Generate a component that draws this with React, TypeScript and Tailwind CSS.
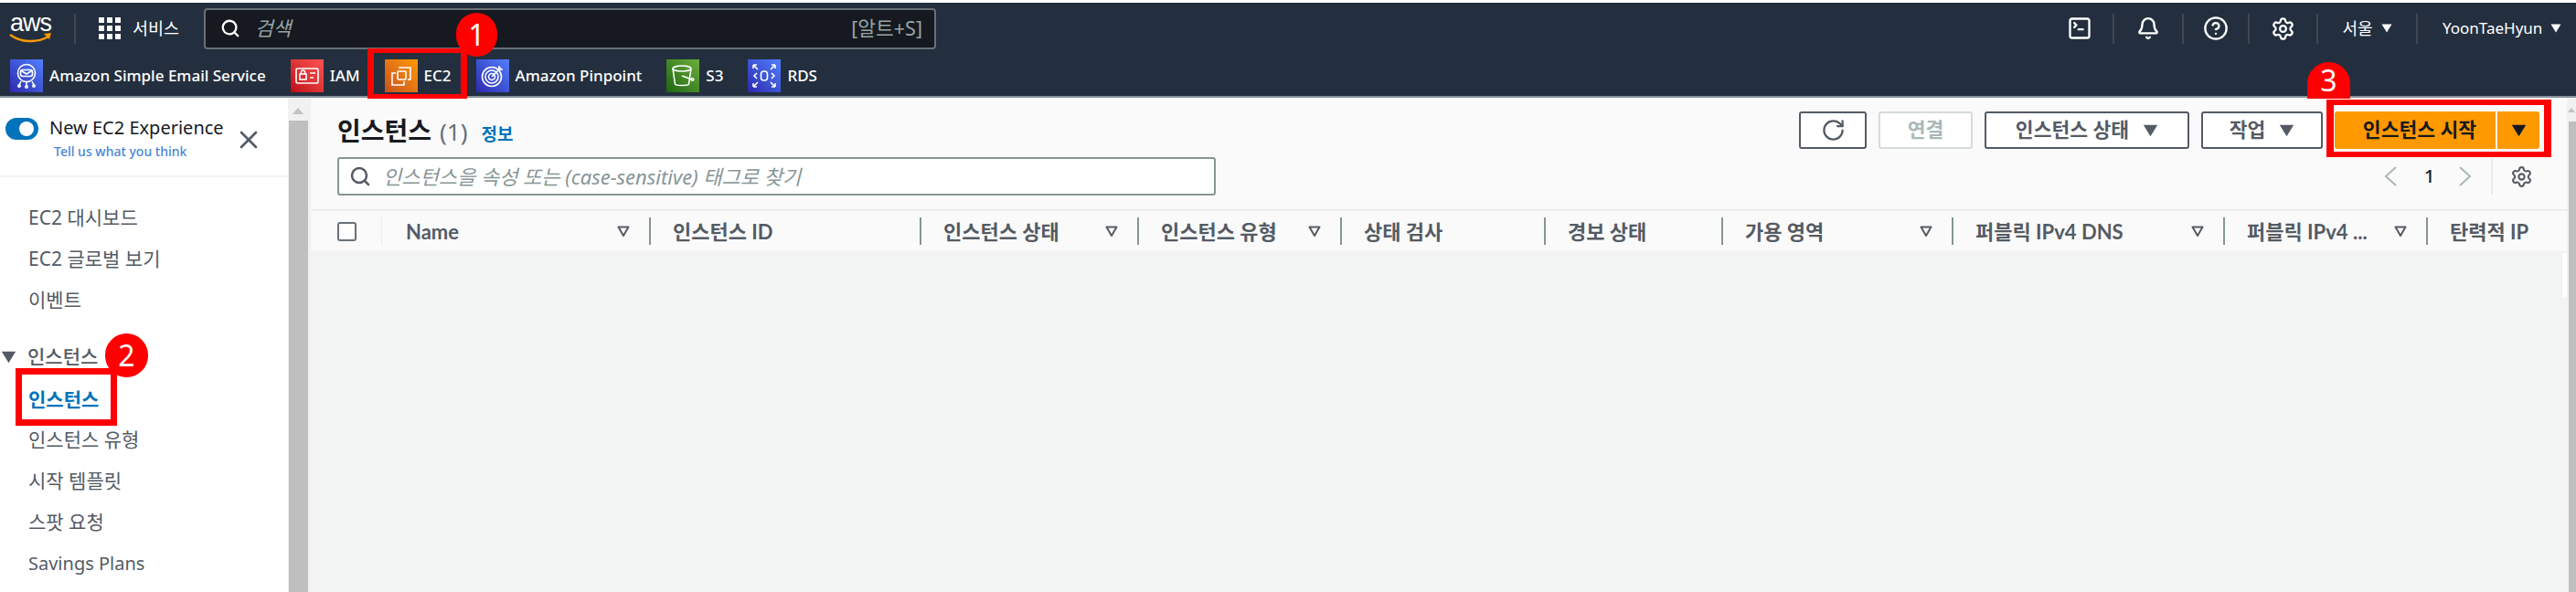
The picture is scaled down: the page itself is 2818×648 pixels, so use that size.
import { type ReactNode } from "react"
import { Bell, CircleHelp, RotateCw, Search, Settings, SquareTerminal, X } from "lucide-react"

function Caret({ className }: { className: string }) {
  return (
    <svg viewBox="0 0 12 10" className={className}>
      <path d="M0.5 0.5h11L6 9.5z" fill="currentColor" />
    </svg>
  )
}

function FilterIcon() {
  return (
    <svg viewBox="0 0 14 14" className="h-[14px] w-[14px] text-[#545b64]">
      <path d="M1.5 2.5h11L7 12z" fill="none" stroke="currentColor" strokeWidth="2" strokeLinejoin="round" />
    </svg>
  )
}

function ServiceIcon({ tone, children }: { tone: string; children: ReactNode }) {
  return (
    <span className={`flex h-[36px] w-[36px] items-center justify-center ${tone}`}>
      <svg viewBox="0 0 36 36" className="h-[36px] w-[36px]" fill="none" stroke="#fff" strokeWidth="1.6">
        {children}
      </svg>
    </span>
  )
}

const blueTone = "bg-gradient-to-tr from-[#2e27ad] to-[#527fff]"

const shortcuts = [
  {
    name: "Amazon Simple Email Service",
    tone: blueTone,
    icon: (
      <>
        <circle cx="18" cy="15" r="9.5" />
        <rect x="11.5" y="11.5" width="13" height="7" rx="2.5" />
        <path d="M11.5 12l6.5 4 6.5-4M18 25v4M12 24l-2 4M24 24l2 4" />
        <circle cx="10" cy="29" r="1.2" />
        <circle cx="18" cy="30" r="1.2" />
        <circle cx="26" cy="29" r="1.2" />
      </>
    ),
  },
  {
    name: "IAM",
    tone: "bg-gradient-to-tr from-[#bd0816] to-[#ff5252]",
    icon: (
      <>
        <rect x="6" y="10" width="24" height="16" rx="1.5" />
        <rect x="10" y="16" width="7" height="6" />
        <path d="M11.5 16v-2a2 2 0 0 1 4 0v2M21 15h6M21 20h4" />
      </>
    ),
  },
  {
    name: "EC2",
    tone: "bg-gradient-to-tr from-[#c8511b] to-[#ff9900]",
    icon: (
      <>
        <rect x="14" y="13" width="9" height="9" rx="1" />
        <path d="M15 9h13v13h-3M12 15H8v13h13v-4" />
      </>
    ),
  },
  {
    name: "Amazon Pinpoint",
    tone: blueTone,
    icon: (
      <>
        <circle cx="17" cy="19" r="10.5" />
        <circle cx="17" cy="19" r="7" />
        <circle cx="17" cy="19" r="3.5" />
        <path d="M17 19L27 9M25 7v4h4" />
      </>
    ),
  },
  {
    name: "S3",
    tone: "bg-gradient-to-tr from-[#1b660f] to-[#6cae3e]",
    icon: (
      <>
        <ellipse cx="17" cy="10" rx="10" ry="3" />
        <path d="M7 10l2.5 17c.3 2 14.700 2 15 0L27 10M17 18l11 4" />
        <circle cx="28.500" cy="22" r="1.300" />
      </>
    ),
  },
  {
    name: "RDS",
    tone: blueTone,
    icon: (
      <>
        <rect x="14.500" y="13" width="7" height="10" rx="3" />
        <path d="M6 6l5 5M6 6v4M6 6h4M30 6l-5 5M30 6v4M30 6h-4M6 30l5-5M6 30v-4M6 30h4M30 30l-5-5M30 30v-4M30 30h-4M10 15l-3 3 3 3M26 15l3 3-3 3" />
      </>
    ),
  },
]

const columns = [
  { label: "Name", width: "w-[292px]", filter: true },
  { label: "인스턴스 ID", width: "w-[296px]", filter: false },
  { label: "인스턴스 상태", width: "w-[238px]", filter: true },
  { label: "인스턴스 유형", width: "w-[222px]", filter: true },
  { label: "상태 검사", width: "w-[223px]", filter: false },
  { label: "경보 상태", width: "w-[194px]", filter: false },
  { label: "가용 영역", width: "w-[252px]", filter: true },
  { label: "퍼블릭 IPv4 DNS", width: "w-[297px]", filter: true },
  { label: "퍼블릭 IPv4 ...", width: "w-[222px]", filter: true },
  { label: "탄력적 IP", width: "w-[154px]", filter: false },
]

function TopBar() {
  return (
    <header className="h-[104px] border-b-2 border-[#8a929b] bg-[#232f3e] text-white">
      <div className="flex h-[56px] items-center pl-[10px]">
        <div className="flex w-[47px] flex-col items-center">
          <span className="font-['Liberation_Sans',sans-serif] text-[27px] leading-[22px] tracking-[-1px]">aws</span>
          <svg viewBox="0 0 47 12" className="h-[12px] w-[47px]">
            <path d="M1 2c12 9 30 9 42 2" fill="none" stroke="#ff9900" strokeWidth="2.500" />
            <path d="M38 1l8-1-2 7z" fill="#ff9900" />
          </svg>
        </div>
        <div className="ml-[24px] h-[33px] border-l-2 border-[#414750]" />
        <svg viewBox="0 0 24 24" className="ml-[25px] h-[24px] w-[24px]" fill="#fff">
          <rect width="6" height="6" />
          <rect x="9" width="6" height="6" />
          <rect x="18" width="6" height="6" />
          <rect y="9" width="6" height="6" />
          <rect x="9" y="9" width="6" height="6" />
          <rect x="18" y="9" width="6" height="6" />
          <rect y="18" width="6" height="6" />
          <rect x="9" y="18" width="6" height="6" />
          <rect x="18" y="18" width="6" height="6" />
        </svg>
        <span className="ml-[13px] w-[53px] text-[18.5px] whitespace-nowrap">서비스</span>
        <div className="ml-[25px] flex h-[45px] w-[801px] items-center rounded-[4px] border-2 border-[#687078] bg-[#16191f] pr-[13px] pl-[16px]">
          <Search className="h-[22px] w-[22px]" strokeWidth={2.5} />
          <span className="ml-[16px] text-[21.5px] text-[#95a5a6] italic">검색</span>
          <span className="ml-auto text-[21.5px] text-[#95a5a6]">[알트+S]</span>
        </div>
        <div className="ml-auto flex items-center">
          <div className="flex h-[33px] w-[74px] items-center justify-center border-r-2 border-[#414750]">
            <SquareTerminal className="h-[28px] w-[28px]" strokeWidth={2} />
          </div>
          <div className="flex h-[33px] w-[76px] items-center justify-center border-r-2 border-[#414750]">
            <Bell className="h-[26px] w-[26px]" strokeWidth={2.2} />
          </div>
          <div className="flex h-[33px] w-[72px] items-center justify-center border-r-2 border-[#414750]">
            <CircleHelp className="h-[28px] w-[28px]" strokeWidth={2} />
          </div>
          <div className="flex h-[33px] w-[75px] items-center justify-center border-r-2 border-[#414750]">
            <Settings className="h-[27px] w-[27px]" strokeWidth={2} />
          </div>
          <div className="flex h-[33px] w-[109px] items-center justify-center gap-[9px] border-r-2 border-[#414750] text-[18px]">
            서울
            <Caret className="h-[10px] w-[12px]" />
          </div>
          <div className="flex h-[33px] w-[173px] items-center gap-[9px] pl-[27px] text-[17px]">
            YoonTaeHyun
            <Caret className="h-[10px] w-[12px]" />
          </div>
        </div>
      </div>
      <div className="flex h-[46px] items-start gap-[27px] pt-[6px] pl-[11px]">
        {shortcuts.map((item) => (
          <div key={item.name} className="flex items-center gap-[7px] text-[17px] font-medium whitespace-nowrap">
            <ServiceIcon tone={item.tone}>{item.icon}</ServiceIcon>
            {item.name}
          </div>
        ))}
      </div>
    </header>
  )
}

function NavItem({ children, active, latin }: { children: ReactNode; active?: boolean; latin?: boolean }) {
  if (active) {
    return <div className="flex h-[43px] items-center pl-[31px] text-[21px] font-bold text-[#0073bb]">{children}</div>
  }
  return (
    <div className={`flex h-[45px] items-center pl-[31px] text-[#545b64] ${latin ? "text-[20px]" : "text-[21px]"}`}>
      {children}
    </div>
  )
}

function Sidebar() {
  return (
    <aside className="flex w-[340px] shrink-0">
      <div className="w-[315px] bg-white">
        <div className="flex h-[87px] items-start border-b-2 border-[#f2f3f3] pt-[22px] pl-[6px]">
          <div className="flex h-[24px] w-[36px] items-center justify-end rounded-full bg-[#0073bb] pr-[5px]">
            <span className="h-[16px] w-[16px] rounded-full bg-white" />
          </div>
          <div className="ml-[12px] -mt-[2px] w-[198px]">
            <div className="text-[20px] leading-[26px] whitespace-nowrap text-[#16191f]">New EC2 Experience</div>
            <div className="mt-[3px] pl-[5px] text-[14px] leading-[20px] font-medium text-[#4a86d6]">Tell us what you think</div>
          </div>
          <X className="mt-[8px] ml-[4px] h-[32px] w-[32px] text-[#545b64]" strokeWidth={2} />
        </div>
        <nav className="pt-[22px]">
          <NavItem>EC2 대시보드</NavItem>
          <NavItem>EC2 글로벌 보기</NavItem>
          <NavItem>이벤트</NavItem>
          <div className="relative mt-[17px] flex h-[45px] items-center pl-[30px] text-[21px] font-medium text-[#545b64]">
            <Caret className="absolute top-[16px] left-[1px] h-[14px] w-[17px]" />
            인스턴스
          </div>
          <div className="mt-[3px]">
            <NavItem active>인스턴스</NavItem>
          </div>
          <NavItem>인스턴스 유형</NavItem>
          <NavItem>시작 템플릿</NavItem>
          <NavItem>스팟 요청</NavItem>
          <NavItem latin>Savings Plans</NavItem>
        </nav>
      </div>
      <div className="w-[25px] bg-[#f1f1f1]">
        <div className="mt-[11px] ml-[5px] h-0 w-0 border-x-[6px] border-b-[7px] border-x-transparent border-b-[#c2c2c2]" />
        <div className="mt-[7px] ml-[1px] h-[516px] w-[21px] bg-[#bfbfbf]" />
      </div>
    </aside>
  )
}

function OutlineButton({ children, disabled, className }: { children: ReactNode; disabled?: boolean; className: string }) {
  const tone = disabled ? "border-[#d5dbdb] text-[#aab7b8]" : "border-[#545b64] text-[#545b64]"
  return (
    <button className={`flex h-[41px] items-center justify-center gap-[15px] rounded-[3px] border-2 bg-white text-[21.5px] font-bold ${tone} ${className}`}>
      {children}
    </button>
  )
}

function InstancesPanel() {
  return (
    <main className="flex min-w-0 flex-1 flex-col bg-[#fafafa]">
      <div className="pt-[15px] pr-[30px] pl-[29px]">
        <div className="flex h-[41px] items-center justify-between">
          <div className="flex items-baseline">
            <h1 className="text-[28px] font-bold text-[#16191f]">인스턴스</h1>
            <span className="ml-[9px] text-[26px] text-[#687078]">(1)</span>
            <span className="ml-[15px] text-[19px] font-bold text-[#0073bb]">정보</span>
          </div>
          <div className="flex items-center gap-[13px]">
            <OutlineButton className="w-[74px]">
              <RotateCw className="h-[27px] w-[27px]" strokeWidth={2} />
            </OutlineButton>
            <OutlineButton disabled className="w-[103px]">연결</OutlineButton>
            <OutlineButton className="w-[224px]">
              인스턴스 상태
              <Caret className="h-[14px] w-[17px]" />
            </OutlineButton>
            <OutlineButton className="w-[133px]">
              작업
              <Caret className="h-[14px] w-[17px]" />
            </OutlineButton>
            <div className="flex h-[41px] w-[224px] rounded-[3px] bg-[#ff9900] text-[21.5px] font-bold text-[#16191f]">
              <span className="flex w-[178px] items-center justify-center border-r-2 border-[#fafafa] pl-[10px]">인스턴스 시작</span>
              <span className="flex flex-1 items-center justify-center">
                <Caret className="h-[14px] w-[17px]" />
              </span>
            </div>
          </div>
        </div>
        <div className="mt-[9px] flex h-[42px] items-center justify-between">
          <div className="flex h-[42px] w-[961px] items-center rounded-[3px] border-2 border-[#879596] bg-white pl-[11px]">
            <Search className="h-[24px] w-[24px] text-[#545b64]" strokeWidth={2.5} />
            <span className="ml-[13px] text-[22px] text-[#879596] italic">인스턴스을 속성 또는 (case-sensitive) 태그로 찾기</span>
          </div>
          <div className="flex h-[40px] items-center pr-[7px]">
            <svg viewBox="0 0 14 22" className="h-[22px] w-[14px]" fill="none" stroke="#aab7b8" strokeWidth="2">
              <path d="M13 1L2 11l11 10" />
            </svg>
            <span className="ml-[30px] w-[8px] text-[20px] font-medium text-[#16191f]">1</span>
            <svg viewBox="0 0 14 22" className="ml-[30px] h-[22px] w-[14px]" fill="none" stroke="#aab7b8" strokeWidth="2">
              <path d="M1 1l11 10L1 21" />
            </svg>
            <div className="ml-[21px] flex h-[40px] items-center border-l-2 border-[#eaeded] pl-[19px]">
              <Settings className="h-[25px] w-[25px] text-[#545b64]" strokeWidth={2} />
            </div>
          </div>
        </div>
      </div>
      <div className="mt-[15px] flex h-[46px] items-center border-t-2 border-[#eaeded]">
        <div className="flex h-[30px] w-[78px] items-center border-r border-[#eaeded] pl-[29px]">
          <span className="h-[21px] w-[21px] rounded-[3px] border-2 border-[#687078] bg-white" />
        </div>
        {columns.map((col) => (
          <div key={col.label} className={`flex h-[30px] items-center justify-between border-l-2 pr-[21px] pl-[24px] font-['Lato','Noto_Sans_CJK_KR',sans-serif] text-[22px] font-bold whitespace-nowrap text-[#545b64] ${col.width} ${col.label === "Name" ? "border-transparent" : "border-[#879596]"}`}>
            {col.label}
            {col.filter && <FilterIcon />}
          </div>
        ))}
      </div>
      <div className="flex flex-1 items-start justify-end bg-[#f2f3f3] pt-[2px]">
        <div className="h-[48px] w-[5px] bg-white" />
      </div>
    </main>
  )
}

function RightScrollbar() {
  return (
    <div className="w-[10px] shrink-0 bg-[#f1f1f1]">
      <div className="mt-[11px] ml-[1px] h-0 w-0 border-x-[4px] border-b-[5px] border-x-transparent border-b-[#c2c2c2]" />
      <div className="mt-[10px] ml-[2px] h-[516px] w-[8px] bg-[#bfbfbf]" />
    </div>
  )
}

function Annotations() {
  return (
    <>
      <div className="absolute top-[53px] left-[402px] h-[55px] w-[109px] border-x-[7px] border-y-[5px] border-[#ff0000]" />
      <div className="absolute top-[403px] left-[17px] h-[63px] w-[111px] border-[7px] border-[#ff0000]" />
      <div className="absolute top-[109px] left-[2545px] h-[63px] w-[246px] border-x-[8px] border-y-[6px] border-[#ff0000]" />
      <div className="absolute top-[14px] left-[499px] flex h-[48px] w-[45px] items-center justify-center rounded-full bg-[#ff0000] text-[32px] leading-none text-white">1</div>
      <div className="absolute top-[365px] left-[115px] flex h-[48px] w-[47px] items-center justify-center rounded-full bg-[#ff0000] text-[32px] leading-none text-white">2</div>
      <div className="absolute top-[68px] left-[2524px] flex h-[40px] w-[47px] items-center justify-center rounded-t-full rounded-b-[24px] bg-[#ff0000] text-[32px] leading-none text-white">3</div>
    </>
  )
}

export default function App() {
  return (
    <div className="relative flex h-[648px] w-[2818px] flex-col overflow-hidden bg-white pt-[3px] font-['Noto_Sans','Noto_Sans_CJK_KR',sans-serif]">
      <TopBar />
      <div className="flex min-h-0 flex-1">
        <Sidebar />
        <InstancesPanel />
        <RightScrollbar />
      </div>
      <Annotations />
    </div>
  )
}
